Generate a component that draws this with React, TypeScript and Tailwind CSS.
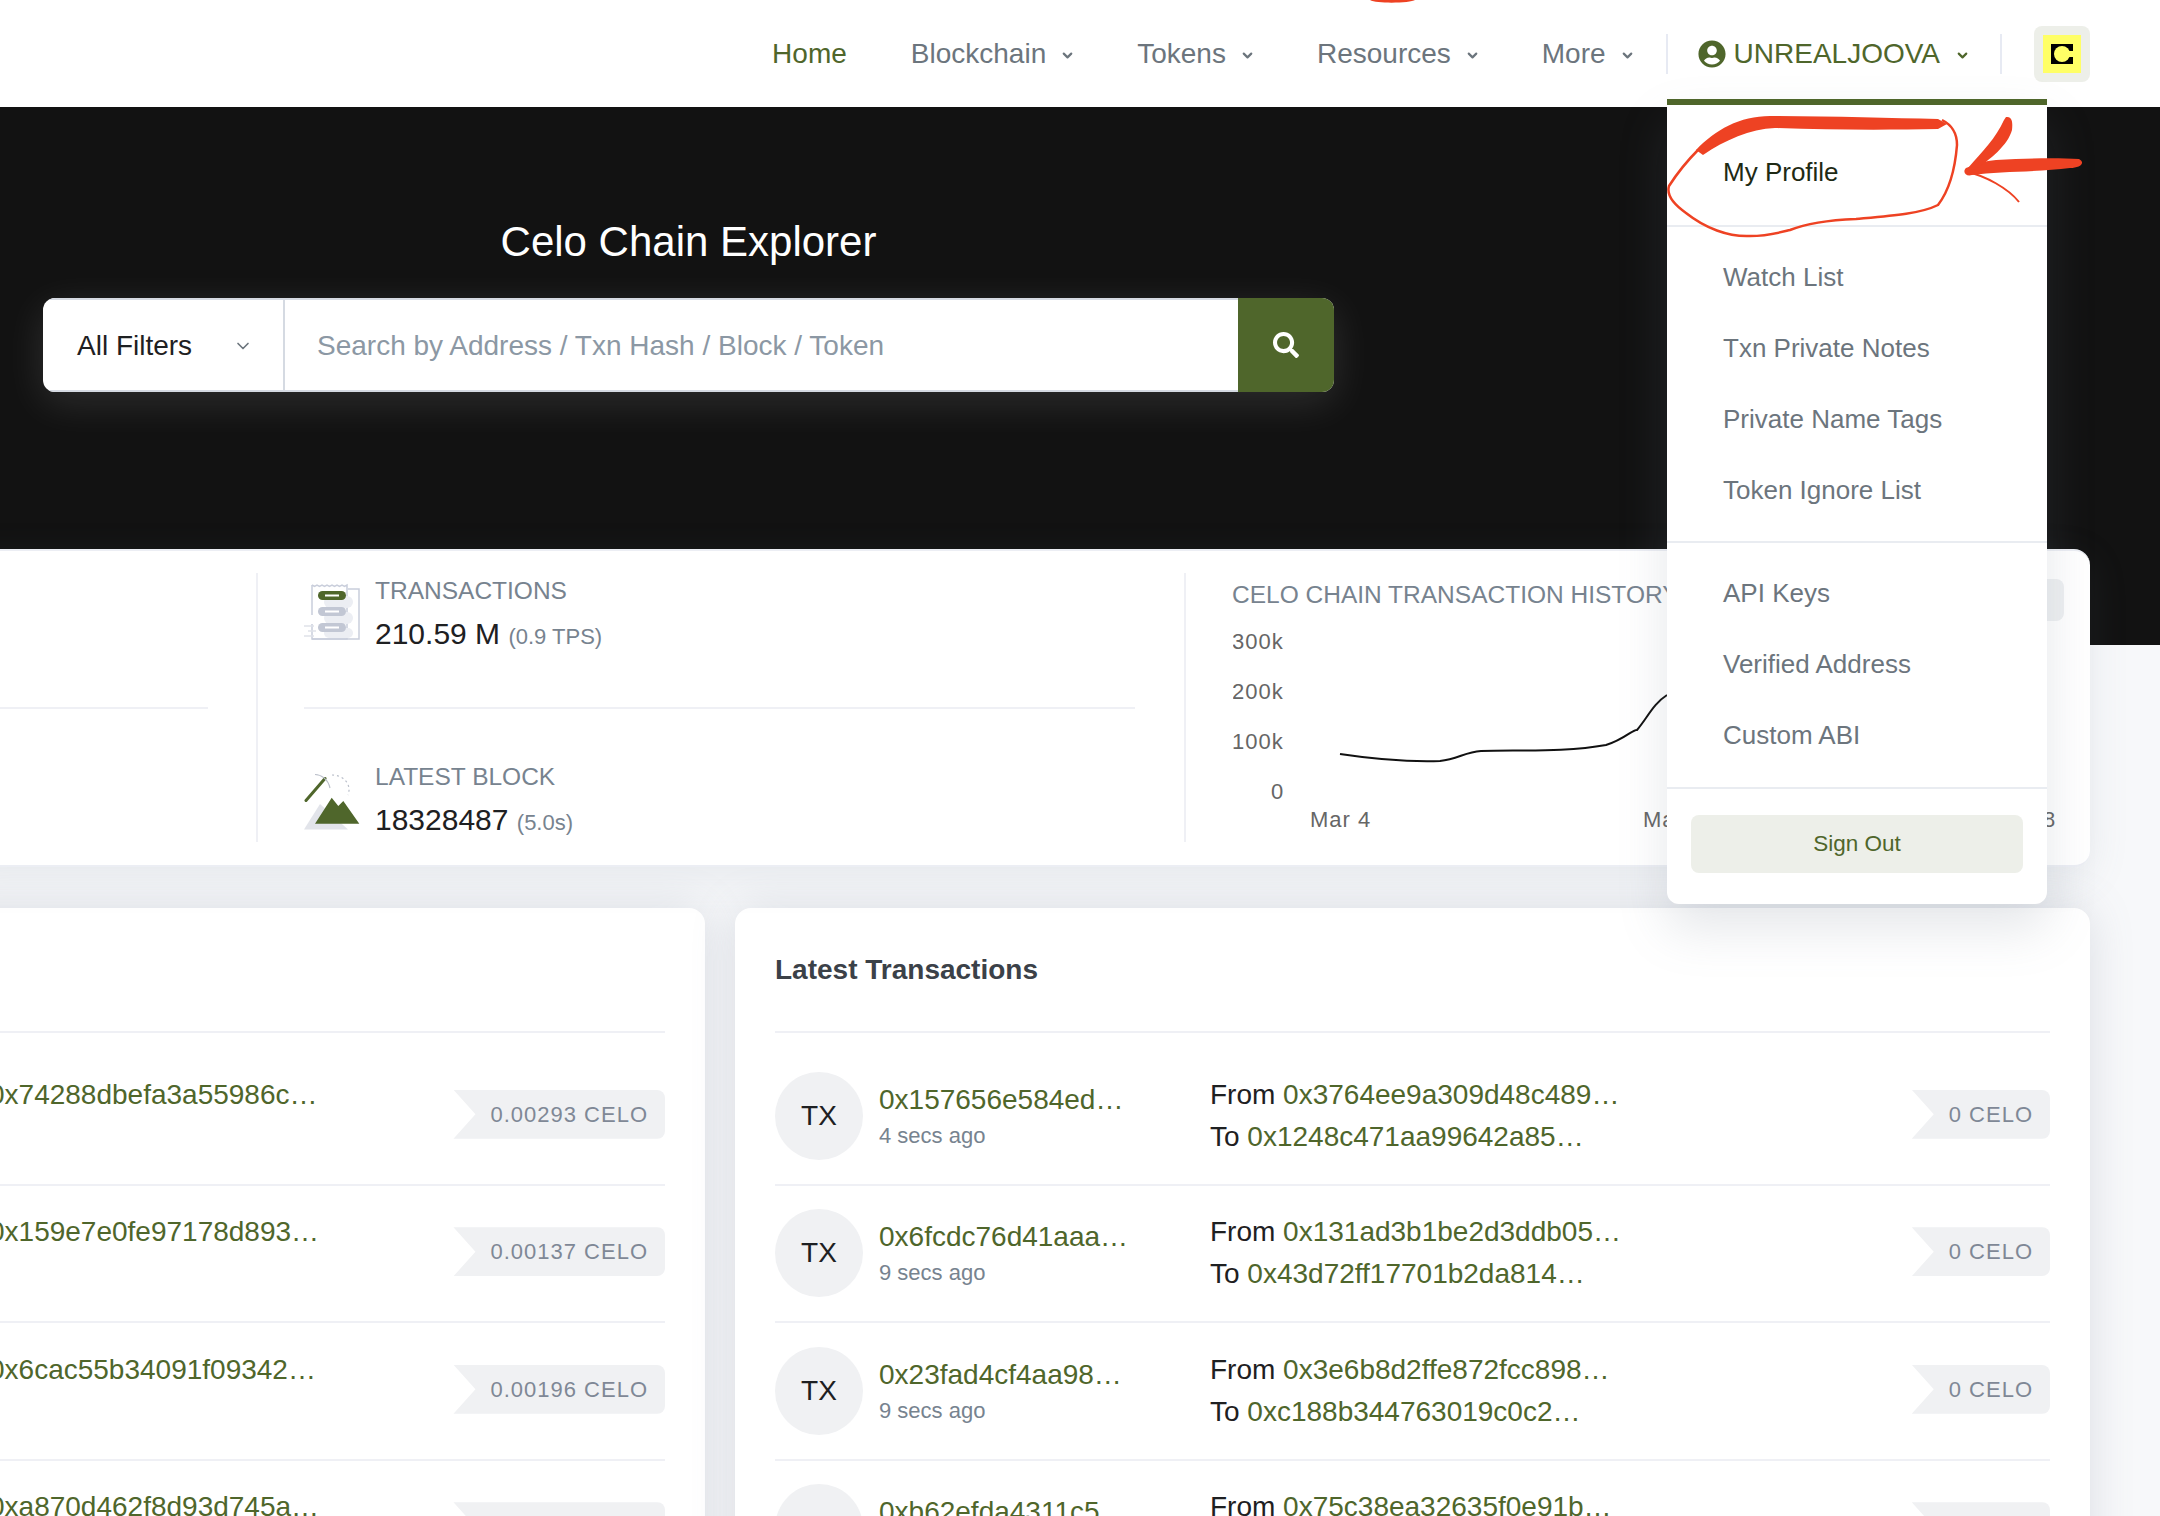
import { FC } from 'react';
import { ChevronDown } from 'lucide-react';
import { FaSearch, FaUserCircle } from 'react-icons/fa';

const navItems = ['Blockchain', 'Tokens', 'Resources', 'More'];

const menuSections = [
  { cls: 'pt-[31px] pb-[18px]', items: ['My Profile'] },
  { cls: 'pt-[14px] pb-[16px]', items: ['Watch List', 'Txn Private Notes', 'Private Name Tags', 'Token Ignore List'] },
  { cls: 'pt-[14px] pb-[17px]', items: ['API Keys', 'Verified Address', 'Custom ABI'] },
];

const blocks = [
  { hash: '0x74288dbefa3a55986c…', value: '0.00293 CELO' },
  { hash: '0x159e7e0fe97178d893…', value: '0.00137 CELO' },
  { hash: '0x6cac55b34091f09342…', value: '0.00196 CELO' },
  { hash: '0xa870d462f8d93d745a…', value: '0.00221 CELO' },
];

const txns = [
  { hash: '0x157656e584ed…', age: '4 secs ago', from: '0x3764ee9a309d48c489…', to: '0x1248c471aa99642a85…' },
  { hash: '0x6fcdc76d41aaa…', age: '9 secs ago', from: '0x131ad3b1be2d3ddb05…', to: '0x43d72ff17701b2da814…' },
  { hash: '0x23fad4cf4aa98…', age: '9 secs ago', from: '0x3e6b8d2ffe872fcc898…', to: '0xc188b344763019c0c2…' },
  { hash: '0xb62efda4311c5…', age: '9 secs ago', from: '0x75c38ea32635f0e91b…', to: '0x9a1f2b7c40de815a3c…' },
];

const Badge: FC<{ text: string }> = ({ text }) => (
  <div className="mb-[3px] flex h-[49px] shrink-0 items-center rounded-r-lg bg-[#f0f1f3] pl-[37px] pr-[17px] text-[22px] tracking-[1px] text-[#7f8896] [clip-path:polygon(0_0,100%_0,100%_100%,0_100%,22px_50%)]">
    {text}
  </div>
);

const TxnIcon = () => (
  <svg width="56" height="60" viewBox="0 0 56 60" fill="none" className="shrink-0">
    <path d="M8 3l2.5 1.5L13 3l2.5 1.5L18 3l2.5 1.5L23 3l2.5 1.5L28 3l2.5 1.5L33 3l2.5 1.5L38 3l2.5 1.5L43 3v54H8V42" stroke="#c9cedb" strokeWidth="1.5" />
    <path d="M8 3v30" stroke="#c9cedb" strokeWidth="1.5" />
    <path d="M44 7h11v50H8" stroke="#c9cedb" strokeWidth="1.5" />
    <rect x="20" y="14" width="29" height="12" rx="6" fill="#eceef3" />
    <rect x="20" y="30" width="29" height="12" rx="6" fill="#eceef3" />
    <rect x="20" y="46" width="29" height="10" rx="5" fill="#eceef3" />
    <rect x="14" y="9" width="28" height="9" rx="4.5" fill="#4f662b" />
    <rect x="14" y="25" width="28" height="9" rx="4.5" fill="#c2c7d4" />
    <rect x="14" y="41" width="28" height="9" rx="4.5" fill="#c2c7d4" />
    <path d="M21 13.5h14M21 29.5h14M21 45.5h14" stroke="#fff" strokeWidth="2" />
    <path d="M0 44h10M4 49h8M0 54h10" stroke="#dfe2e9" strokeWidth="1.5" />
  </svg>
);

const BlockIcon = () => (
  <svg width="56" height="60" viewBox="0 0 56 60" fill="none" className="shrink-0">
    <path d="M0 58.5L16 33l28 25.5z" fill="#e2e4ea" />
    <path d="M11 52.7L27.7 26.7l6.6 8.3 5-5 16 22.7z" fill="#4f662b" />
    <path d="M2 29.5L21 7.5" stroke="#4f662b" strokeWidth="3" strokeLinecap="round" />
    <path d="M11 3.5C17 3.5 24 8 26 17" stroke="#b9bec9" strokeWidth="1.2" />
    <path d="M28 4C40 4 48 14 44 24" stroke="#b9bec9" strokeWidth="1.2" strokeDasharray="2 3" />
  </svg>
);

const Chart = () => (
  <svg width="860" height="270" viewBox="0 0 860 270" className="ml-[1px] mt-[4px] block" fontFamily="Liberation Sans, sans-serif" fontSize="22" letterSpacing="1" fill="#666">
    <text x="-1" y="32">300k</text>
    <text x="-1" y="82">200k</text>
    <text x="-1" y="132">100k</text>
    <text x="38" y="182">0</text>
    <text x="77" y="210">Mar 4</text>
    <text x="410" y="210">Mar 6</text>
    <text x="762" y="210">Mar 8</text>
    <path d="M107 137C140 142 175 145 207 144C225 142 232 135 248 134C290 133 335 135 373 128C392 122 400 112 404 113C415 100 420 87 434 78" fill="none" stroke="#111" strokeWidth="2" />
  </svg>
);

const Annotations = () => (
  <svg width="2160" height="1516" viewBox="0 0 2160 1516" fill="none" className="pointer-events-none absolute left-0 top-0 z-30">
    <path d="M1370 0h45c-4 3-38 4-45 0z" fill="#ee4223" />
    <path d="M1938 119L1947 124L1938 129C1890 130 1830 130 1775 128C1750 129 1725 140 1703 155L1696 150C1715 130 1740 116 1770 116C1830 116 1890 118 1938 119z" fill="#ee4223" />
    <path d="M1698 150C1688 160 1678 172 1669 186C1666 196 1676 206 1686 213C1705 228 1728 237 1750 236C1768 236 1778 233 1790 230C1810 222 1832 220 1856 219C1890 216 1920 214 1938 205C1948 192 1955 170 1957 145C1957 134 1952 125 1942 120" stroke="#ee4223" strokeWidth="2.5" />
    <path d="M2079 159C2086 163 2080 168 2070 168C2040 172 2000 171 1972 175C1966 177 1962 172 1966 168C1976 164 1985 161 1996 160C2030 158 2060 158 2079 159z" fill="#ee4223" />
    <path d="M2006 117C2012 116 2013 122 2012 130C2008 145 1990 160 1974 170L1968 168C1982 152 1996 138 2004 120z" fill="#ee4223" />
    <path d="M1968 172C1985 176 2008 188 2019 202" stroke="#ee4223" strokeWidth="2" />
  </svg>
);

const App: FC = () => {
  return (
    <div className="relative h-[1516px] w-[2160px] overflow-hidden bg-[#f7f8fa] font-['Liberation_Sans',sans-serif] text-[28px] text-[#1e2022]">
      {/* Top nav */}
      <nav className="flex h-[107px] items-center justify-end bg-white pr-[70px] text-[#6c757d]">
        <a className="mr-[64px] text-[#4f662b]">Home</a>
        {navItems.map((item) => (
          <a key={item} className={`flex items-center gap-[14px] ${item === 'More' ? 'mr-[31px]' : 'mr-[62px]'}`}>
            {item}
            <ChevronDown size={15} strokeWidth={3.5} className="mt-[4px]" />
          </a>
        ))}
        <div className="flex h-[40px] items-center border-x-2 border-[#e7eaf3] pl-[30px] pr-[30px] text-[#4f662b]">
          <FaUserCircle size={28} className="mr-[8px]" />
          UNREALJOOVA
          <ChevronDown size={15} strokeWidth={3.5} className="ml-[15px] mt-[4px]" />
        </div>
        <div className="ml-[32px] flex h-[56px] w-[56px] items-center justify-center rounded-lg bg-[#edefe9]">
          <div className="flex h-[38px] w-[38px] items-center justify-center bg-[#ffff66]">
            <svg width="22" height="20" viewBox="0 0 22 20">
              <rect width="22" height="20" fill="#000" />
              <circle cx="11" cy="10" r="8" fill="#ffff66" />
              <rect x="11" y="7" width="11" height="6" fill="#ffff66" />
            </svg>
          </div>
        </div>
      </nav>

      {/* Hero */}
      <section className="h-[538px] bg-[#121212] pl-[43px] pt-[109px]">
        <div className="w-[1291px]">
          <h1 className="text-center text-[42px] leading-[52px] text-white">Celo Chain Explorer</h1>
          <div className="mt-[30px] flex h-[94px] overflow-hidden rounded-xl bg-white shadow-[0_10px_40px_rgba(255,255,255,0.12)]">
            <div className="flex w-[242px] items-center justify-between border-y-2 border-r-2 border-[#d5dae2] pl-[34px] pr-[30px] pt-[2px]">
              All Filters
              <ChevronDown size={20} strokeWidth={2} className="text-[#6c757d]" />
            </div>
            <div className="flex flex-1 items-center border-y-2 border-[#d5dae2] pl-[32px] pt-[2px] text-[#8c98a4]">Search by Address / Txn Hash / Block / Token</div>
            <button className="flex w-[96px] items-center justify-center bg-[#4f662b] text-white">
              <FaSearch size={26} />
            </button>
          </div>
        </div>
      </section>

      {/* Stats card */}
      <section className="relative z-10 -ml-[40px] -mt-[96px] flex h-[318px] w-[2130px] rounded-2xl border-y-2 border-[#eceef4] bg-white pt-[22px] shadow-[0_10px_40px_rgba(110,120,140,0.12)]">
        <div className="h-[269px] w-[298px] shrink-0 border-r-2 border-[#eff0f5]">
          <div className="mt-[134px] h-[2px] w-[248px] bg-[#eff0f5]" />
        </div>
        <div className="h-[269px] w-[928px] shrink-0 border-r-2 border-[#eff0f5] pl-[46px] pr-[49px]">
          <div className="flex h-[136px] gap-[15px] border-b-2 border-[#eff0f5] pt-[9px]">
            <TxnIcon />
            <div className="-mt-[9px]">
              <div className="text-[24.5px] leading-[36px] text-[#77838f]">TRANSACTIONS</div>
              <div className="mt-[7px] text-[30px] leading-[36px]">
                210.59 M <span className="text-[22px] text-[#77838f]">(0.9 TPS)</span>
              </div>
            </div>
          </div>
          <div className="flex gap-[15px] pt-[62px]">
            <BlockIcon />
            <div className="-mt-[12px]">
              <div className="text-[24.5px] leading-[36px] text-[#77838f]">LATEST BLOCK</div>
              <div className="mt-[7px] text-[30px] leading-[36px]">
                18328487 <span className="text-[22px] text-[#77838f]">(5.0s)</span>
              </div>
            </div>
          </div>
        </div>
        <div className="relative min-w-0 flex-1 pl-[46px] pt-[4px]">
          <div className="whitespace-nowrap text-[24.5px] leading-[36px] text-[#77838f]">CELO CHAIN TRANSACTION HISTORY</div>
          <Chart />
          <div className="absolute right-[26px] top-[6px] h-[42px] w-[60px] rounded-lg bg-[#eef0f2]" />
        </div>
      </section>

      {/* Latest lists */}
      <section className="mt-[41px] flex gap-[30px]">
        <div className="-ml-[100px] w-[805px] shrink-0 rounded-2xl bg-white pl-[89px] pr-[40px] pt-[123px] shadow-[0_0_45px_rgba(110,120,140,0.2)]">
          <div className="border-t-2 border-[#eff0f5] pt-[15px]">
            {blocks.map((b) => (
              <div key={b.hash} className="flex h-[137.5px] items-center justify-between border-b-2 border-[#eff0f5]">
                <a className="mb-[42px] text-[#4f662b]">{b.hash}</a>
                <Badge text={b.value} />
              </div>
            ))}
          </div>
        </div>

        <div className="w-[1355px] shrink-0 rounded-2xl bg-white px-[40px] shadow-[0_0_45px_rgba(110,120,140,0.2)]">
          <h2 className="flex h-[123px] items-center text-[28px] font-bold text-[#3b4148]">Latest Transactions</h2>
          <div className="border-t-2 border-[#eff0f5] pt-[15px]">
            {txns.map((t) => (
              <div key={t.hash} className="flex h-[137.5px] items-center border-b-2 border-[#eff0f5]">
                <div className="flex h-[88px] w-[88px] shrink-0 items-center justify-center rounded-full bg-[#f0f1f3]">TX</div>
                <div className="ml-[16px] mt-[4px] w-[331px]">
                  <a className="block leading-[36px] text-[#4f662b]">{t.hash}</a>
                  <div className="text-[22px] leading-[36px] text-[#77838f]">{t.age}</div>
                </div>
                <div className="flex-1 leading-[42px]">
                  <div>
                    From <a className="text-[#4f662b]">{t.from}</a>
                  </div>
                  <div>
                    To <a className="text-[#4f662b]">{t.to}</a>
                  </div>
                </div>
                <Badge text="0 CELO" />
              </div>
            ))}
          </div>
        </div>
      </section>

      {/* Account dropdown */}
      <div className="absolute left-[1667px] top-[99px] z-20 w-[380px] rounded-b-xl border-t-[6px] border-[#4f662b] bg-white shadow-[0_25px_50px_rgba(110,120,140,0.18)]">
        {menuSections.map((section, i) => (
          <div key={i} className={`border-b-2 border-[#e9ecf1] ${section.cls}`}>
            {section.items.map((item) => (
              <div key={item} className={`flex h-[71px] items-center pl-[56px] pt-[2px] text-[26px] ${item === 'My Profile' ? 'text-[#1e2a14]' : 'text-[#6c757d]'}`}>
                {item}
              </div>
            ))}
          </div>
        ))}
        <div className="px-[24px] pb-[31px] pt-[26px]">
          <button className="h-[58px] w-full rounded-lg bg-[#edefe9] text-[22.5px] text-[#4f662b]">Sign Out</button>
        </div>
      </div>

      <Annotations />
    </div>
  );
};

export default App;
